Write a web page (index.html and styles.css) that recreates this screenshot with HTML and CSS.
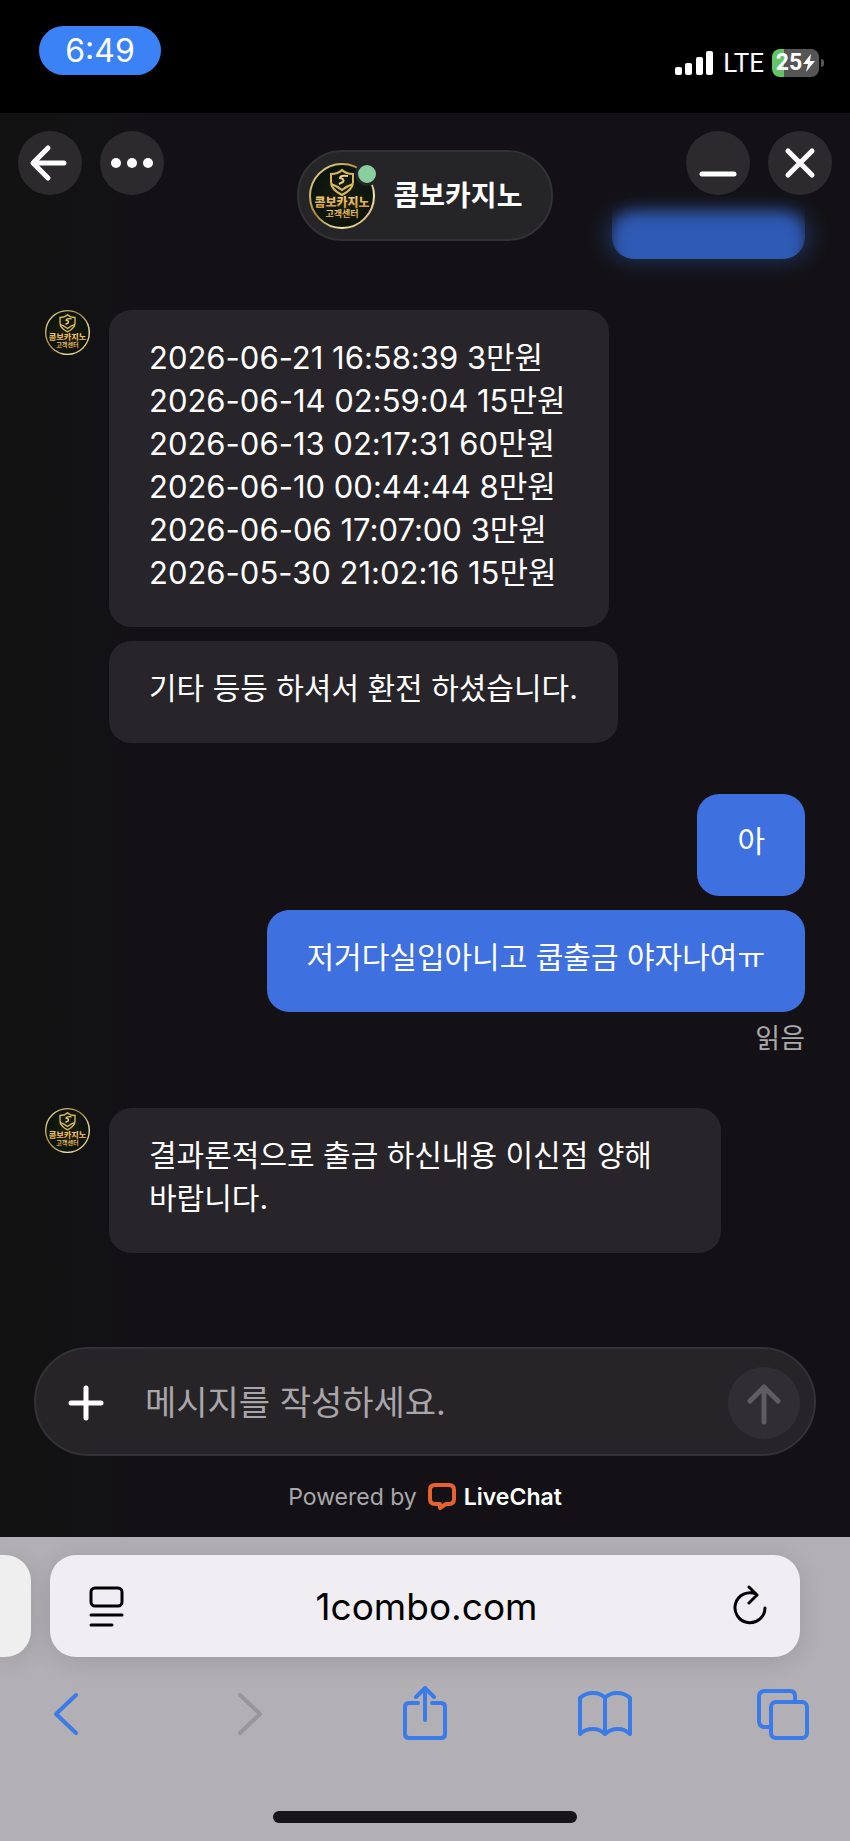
FILE: index.html
```html
<!DOCTYPE html>
<html lang="ko">
<head>
    <meta charset="UTF-8">
    <meta name="viewport" content="width=device-width, initial-scale=1.0">
    <title>콤보카지노</title>
    <link rel="stylesheet" href="styles.css">
</head>
<body>
    <!-- Shared badge, used by the header and the messages -->
    <svg class="sprite" aria-hidden="true">
        <defs>
            <linearGradient id="gold" x1="0" y1="0" x2="1" y2="1">
                <stop offset="0" stop-color="#f3e6a4"/>
                <stop offset="0.45" stop-color="#a98632"/>
                <stop offset="0.75" stop-color="#f5e9b0"/>
                <stop offset="1" stop-color="#b8892f"/>
            </linearGradient>
            <linearGradient id="goldText" x1="0" y1="0" x2="0" y2="1">
                <stop offset="0" stop-color="#f7e08a"/>
                <stop offset="1" stop-color="#c98a2c"/>
            </linearGradient>
            <radialGradient id="dark">
                <stop offset="0" stop-color="#1c1c0d"/>
                <stop offset="1" stop-color="#0a140d"/>
            </radialGradient>
        </defs>
        <symbol id="badge" viewBox="0 0 66 66">
            <circle cx="33" cy="33" r="32" fill="url(#dark)" stroke="url(#gold)" stroke-width="2"/>
            <path d="M33 7 C30 10 26 11 22 11 V19 C22 25 27 29 33 32 C39 29 44 25 44 19 V11 C40 11 36 10 33 7 Z" fill="none" stroke="#d9b957" stroke-width="2"/>
            <path d="M39 13 Q31 12 31 15 Q36 16 34 19 L30 21" fill="none" stroke="#e8d07a" stroke-width="2"/>
            <path d="M22 21 Q28 23 33 27 Q38 23 44 21" fill="none" stroke="#d9b957" stroke-width="2"/>
        </symbol>
    </svg>

    <div class="status-bar">
        <div class="clock">6:49</div>
        <div class="status-icons">
            <svg class="signal" viewBox="0 0 38 24">
                <rect x="0" y="16" width="7" height="8" rx="2"/>
                <rect x="10" y="12" width="7" height="12" rx="2"/>
                <rect x="21" y="6" width="7" height="18" rx="2"/>
                <rect x="31" y="0" width="7" height="24" rx="2"/>
            </svg>
            <span class="network">LTE</span>
            <div class="battery">
                <span>25</span>
                <svg class="bolt" viewBox="0 0 12 18"><path d="M8 0 L0 10 H5 L3 18 L12 7 H7 Z"/></svg>
            </div>
        </div>
    </div>

    <main class="chat">
        <header class="chat-header">
            <div class="faded-message"></div>
            <div class="header-buttons">
                <button class="round-btn" aria-label="뒤로">
                    <svg viewBox="0 0 64 64"><path d="M46 32 H16 M30 17 L15 32 L30 47"/></svg>
                </button>
                <button class="round-btn" aria-label="메뉴">
                    <svg viewBox="0 0 64 64" class="dots"><circle cx="16" cy="32" r="5"/><circle cx="32" cy="32" r="5"/><circle cx="48" cy="32" r="5"/></svg>
                </button>
            </div>
            <div class="agent">
                <div class="agent-avatar">
                    <svg viewBox="0 0 66 66">
                        <use href="#badge"/>
                        <text class="logo-name" x="33" y="44">콤보카지노</text>
                        <text class="logo-sub" x="33" y="54">고객센터</text>
                    </svg>
                    <span class="online"></span>
                </div>
                <h1>콤보카지노</h1>
            </div>
            <div class="header-buttons right">
                <button class="round-btn" aria-label="최소화">
                    <svg viewBox="0 0 64 64"><path d="M16 43 H48"/></svg>
                </button>
                <button class="round-btn" aria-label="닫기">
                    <svg viewBox="0 0 64 64"><path d="M20 20 L44 44 M44 20 L20 44"/></svg>
                </button>
            </div>
        </header>

        <div class="messages">
            <div class="group">
                <svg class="avatar" viewBox="0 0 66 66">
                    <use href="#badge"/>
                    <text class="logo-name" x="33" y="44">콤보카지노</text>
                    <text class="logo-sub" x="33" y="54">고객센터</text>
                </svg>
                <div class="bubbles">
                    <p class="bubble history">2026-06-21 16:58:39 3만원<br>2026-06-14 02:59:04 15만원<br>2026-06-13 02:17:31 60만원<br>2026-06-10 00:44:44 8만원<br>2026-06-06 17:07:00 3만원<br>2026-05-30 21:02:16 15만원</p>
                    <p class="bubble">기타 등등 하셔서 환전 하셨습니다.</p>
                </div>
            </div>
            <div class="group mine">
                <div class="bubbles">
                    <p class="bubble">아</p>
                    <p class="bubble">저거다실입아니고 쿱출금 야자나여ㅠ</p>
                    <span class="read">읽음</span>
                </div>
            </div>
            <div class="group">
                <svg class="avatar" viewBox="0 0 66 66">
                    <use href="#badge"/>
                    <text class="logo-name" x="33" y="44">콤보카지노</text>
                    <text class="logo-sub" x="33" y="54">고객센터</text>
                </svg>
                <div class="bubbles">
                    <p class="bubble">결과론적으로 출금 하신내용 이신점 양해 바랍니다.</p>
                </div>
            </div>
        </div>

        <form class="composer">
            <button class="attach" type="button" aria-label="첨부">
                <svg viewBox="0 0 36 36"><path d="M18 3 V33 M3 18 H33"/></svg>
            </button>
            <input type="text" placeholder="메시지를 작성하세요." aria-label="메시지">
            <button class="send" type="button" aria-label="보내기">
                <svg viewBox="0 0 72 72"><path d="M36 55 V20 M22 34 L36 20 L50 34"/></svg>
            </button>
        </form>

        <div class="powered">
            <span>Powered by</span>
            <a href="#">
                <svg viewBox="0 0 28 27"><path d="M7 2 H21 Q26 2 26 7 V16 Q26 21 21 21 H18 L12 25 V21 H7 Q2 21 2 16 V7 Q2 2 7 2 Z"/></svg>
                LiveChat
            </a>
        </div>
    </main>

    <footer class="browser">
        <div class="tabs">
            <div class="prev-tab"></div>
            <div class="address">
                <button aria-label="페이지 설정">
                    <svg viewBox="0 0 40 44"><rect x="6" y="4" width="31" height="18" rx="4"/><path d="M6 31 H37 M6 41 H27"/></svg>
                </button>
                <input type="text" value="1combo.com" aria-label="주소">
                <button aria-label="새로고침">
                    <svg viewBox="0 0 40 44"><path d="M37 24 A15 15 0 1 1 28 10 M21 3 L29 11 L21 19"/></svg>
                </button>
            </div>
        </div>
        <nav class="toolbar">
            <button aria-label="뒤로"><svg viewBox="0 0 56 56"><path d="M38 9 L18 28 L38 47"/></svg></button>
            <button aria-label="앞으로" disabled><svg viewBox="0 0 56 56"><path d="M22 9 L42 28 L22 47"/></svg></button>
            <button aria-label="공유"><svg viewBox="0 0 56 56"><path d="M28 34 V2 M19 11 L28 2 L37 11 M21 17 H12 Q8 17 8 21 V48 Q8 52 12 52 H44 Q48 52 48 48 V21 Q48 17 44 17 H35"/></svg></button>
            <button aria-label="책갈피"><svg viewBox="0 0 56 56"><path d="M28 12 V48 M28 12 Q24 7 16 7 Q8 7 3 12 V48 Q8 43 16 43 Q23 43 28 48 Q33 43 41 43 Q48 43 53 48 V12 Q48 7 40 7 Q32 7 28 12"/></svg></button>
            <button aria-label="탭"><svg viewBox="0 0 56 56"><rect x="15" y="16" width="36" height="36" rx="5"/><path d="M15 41 H9 Q3 41 3 35 V11 Q3 5 9 5 H34 Q39 5 39 10 V16"/></svg></button>
        </nav>
        <div class="home-indicator"></div>
    </footer>
</body>
</html>
```
FILE: styles.css
```css
* {
    box-sizing: border-box;
}

body {
    margin: 0;
    min-height: 100vh;
    display: flex;
    flex-direction: column;
    background: #000;
    color: #fff;
    font-family: Inter, "Noto Sans CJK KR", sans-serif;
    overflow-x: hidden;
}

button {
    border: none;
    background: none;
    padding: 0;
    cursor: pointer;
    flex: none;
}

button svg {
    display: block;
    width: 100%;
    height: 100%;
    fill: none;
    stroke: currentColor;
    stroke-width: 5;
    stroke-linecap: round;
    stroke-linejoin: round;
}

input {
    border: none;
    background: none;
    padding: 0;
    min-width: 0;
    flex: 1;
    font-family: inherit;
    outline: none;
}

.sprite {
    position: absolute;
    width: 0;
    height: 0;
}

.logo-name,
.logo-sub {
    font-family: "Noto Sans CJK KR", sans-serif;
    font-size: 12px;
    font-weight: 900;
    text-anchor: middle;
    fill: url(#goldText);
}

.logo-sub {
    font-size: 9px;
    font-weight: 700;
}

/* Status bar */
.status-bar {
    height: 113px;
    padding: 26px 26px 0 39px;
    display: flex;
    justify-content: space-between;
    align-items: flex-start;
}

.clock {
    width: 122px;
    height: 49px;
    border-radius: 25px;
    background: #3b82f7;
    font-size: 32px;
    line-height: 49px;
    text-align: center;
}

.status-icons {
    display: flex;
    align-items: center;
    padding-top: 22px;
}

.signal {
    width: 38px;
    height: 24px;
    fill: #fff;
    margin-right: 10px;
}

.network {
    font-family: Roboto, sans-serif;
    font-size: 26px;
    line-height: 30px;
    margin-right: 8px;
}

.battery {
    position: relative;
    width: 47px;
    height: 28px;
    margin-right: 5px;
    border-radius: 8px;
    background: linear-gradient(90deg, #65c466 12px, #555 12px);
    display: flex;
    align-items: center;
    justify-content: center;
    gap: 1px;
    font-family: Roboto, sans-serif;
    font-size: 23px;
    font-weight: 700;
    line-height: 28px;
}

.battery::after {
    content: "";
    position: absolute;
    right: -5px;
    top: 10px;
    width: 3px;
    height: 8px;
    border-radius: 0 3px 3px 0;
    background: #555;
}

.bolt {
    width: 12px;
    height: 18px;
    fill: #fff;
}

/* Chat */
.chat {
    flex: 1;
    display: flex;
    flex-direction: column;
    background: linear-gradient(90deg, #121212 0, #131115 160px);
}

.chat-header {
    position: relative;
    display: grid;
    grid-template-columns: 1fr auto 1fr;
    align-items: start;
    padding: 18px 18px 0;
    height: 146px;
}

.header-buttons {
    position: relative;
    display: flex;
    gap: 18px;
}

.header-buttons.right {
    justify-content: flex-end;
}

.round-btn {
    width: 64px;
    height: 64px;
    border-radius: 50%;
    background: #2c2a2d;
    color: #fff;
}

.round-btn .dots {
    fill: #fff;
    stroke: none;
}

.agent {
    display: flex;
    align-items: center;
    gap: 19px;
    margin-top: 19px;
    height: 91px;
    padding: 0 29px 0 10px;
    border: 2px solid #323133;
    border-radius: 46px;
    background: #252426;
}

.agent-avatar {
    position: relative;
    width: 66px;
    height: 66px;
}

.agent-avatar svg {
    display: block;
    width: 66px;
    height: 66px;
}

.online {
    position: absolute;
    top: -1px;
    right: -4px;
    width: 24px;
    height: 24px;
    border: 3px solid #252426;
    border-radius: 50%;
    background: #88ce9f;
}

.agent h1 {
    margin: 0;
    font-size: 28px;
    line-height: 40px;
    font-weight: 700;
}

/* Message that scrolls away under the header */
.faded-message {
    position: absolute;
    right: 45px;
    bottom: 0;
    width: 193px;
    height: 46px;
}

.faded-message::before,
.faded-message::after {
    content: "";
    position: absolute;
    inset: 0 -4px;
    border-radius: 22px;
    background: #2f5bb5;
    opacity: 0.5;
    filter: blur(12px);
}

/* soft on top, cut to the bubble's own edge at the bottom */
.faded-message::after {
    inset: 0 0 -20px;
    opacity: 1;
    filter: blur(8px);
    clip-path: inset(-30px 0 20px round 22px);
}

.messages {
    flex: 1;
    display: flex;
    flex-direction: column;
    padding: 51px 45px 0;
}

.group {
    display: flex;
    align-items: flex-start;
    gap: 19px;
    margin-bottom: 51px;
}

.avatar {
    flex: none;
    width: 45px;
    height: 45px;
}

.bubbles {
    flex: 1;
    display: flex;
    flex-direction: column;
    align-items: flex-start;
    gap: 14px;
}

.bubble {
    margin: 0;
    max-width: 88%;
    padding: 26px 40px 33px;
    border-radius: 22px;
    background: #272529;
    font-size: 30px;
    line-height: 43px;
    word-break: keep-all;
}

.bubble.history {
    font-size: 31px;
    padding-right: 44px;
}

.mine .bubbles {
    align-items: flex-end;
}

.mine .bubble {
    background: #3e70e0;
}

.read {
    margin-top: -5px;
    color: #a9a8aa;
    font-size: 27px;
    line-height: 36px;
}

/* Composer */
.composer {
    display: flex;
    align-items: center;
    margin: 0 34px;
    height: 109px;
    padding: 2px 14px 0 32px;
    border: 2px solid #333135;
    border-radius: 55px;
    background: #272428;
}

.attach {
    width: 36px;
    height: 36px;
    margin-right: 41px;
    color: #fff;
}

.composer input {
    height: 52px;
    color: #fff;
    font-size: 34px;
}

.composer input::placeholder {
    color: #a9a6aa;
    opacity: 1;
}

.send {
    width: 72px;
    height: 72px;
    border-radius: 50%;
    background: #302e32;
    color: #5f5d61;
}

.powered {
    display: flex;
    justify-content: center;
    align-items: center;
    gap: 11px;
    height: 81px;
    color: #a9a8ab;
    font-size: 23px;
}

.powered a {
    display: flex;
    align-items: center;
    gap: 8px;
    color: #fff;
    font-weight: 600;
    text-decoration: none;
}

.powered svg {
    width: 28px;
    height: 27px;
    fill: none;
    stroke: #e8622c;
    stroke-width: 4;
    stroke-linejoin: round;
}

/* Browser bar */
.browser {
    background: #b2b0b4;
    color: #000;
}

.tabs {
    display: flex;
    gap: 19px;
    padding: 18px 50px 0 0;
}

.prev-tab {
    width: 31px;
    border-radius: 0 26px 26px 0;
    background: #efefef;
    box-shadow: 0 4px 24px rgba(0, 0, 0, 0.12);
}

.address {
    flex: 1;
    display: flex;
    align-items: center;
    height: 102px;
    padding: 0 32px 0 35px;
    border-radius: 26px;
    background: #f0eef3;
    box-shadow: 0 4px 24px rgba(0, 0, 0, 0.12);
}

.address button {
    width: 40px;
    height: 44px;
    color: #000;
}

.address button svg {
    stroke-width: 3;
}

.address input {
    color: #000;
    font-size: 37px;
    text-align: center;
}

.toolbar {
    display: flex;
    justify-content: space-between;
    padding: 29px 38px 0;
}

.toolbar button {
    width: 56px;
    height: 56px;
    color: #3b7be8;
}

.toolbar button svg {
    stroke-width: 4;
}

.toolbar button:disabled {
    color: #98969a;
}

.home-indicator {
    width: 304px;
    height: 12px;
    margin: 69px auto 18px;
    border-radius: 6px;
    background: #17151a;
}
```
